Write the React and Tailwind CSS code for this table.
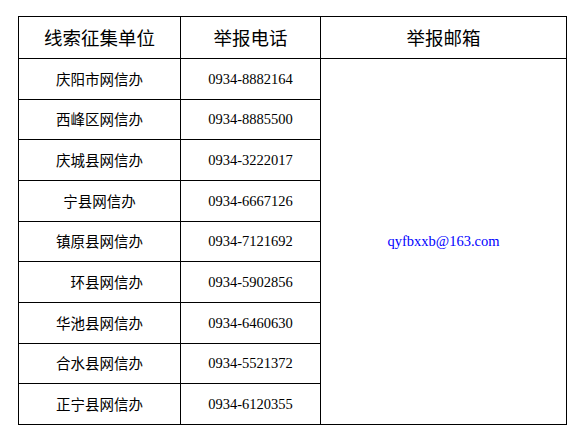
const rows = [
  ["庆阳市网信办", "0934-8882164"],
  ["西峰区网信办", "0934-8885500"],
  ["庆城县网信办", "0934-3222017"],
  ["宁县网信办", "0934-6667126"],
  ["镇原县网信办", "0934-7121692"],
  ["\u3000环县网信办", "0934-5902856"],
  ["华池县网信办", "0934-6460630"],
  ["合水县网信办", "0934-5521372"],
  ["正宁县网信办", "0934-6120355"],
];

const cjk = "font-['Noto_Sans_CJK_SC','Noto_Sans',sans-serif]";
const serif = "font-['Liberation_Serif','Times_New_Roman',serif]";

export default function App() {
  return (
    <div className="w-[576px] h-[435px] bg-white pl-[18px] pt-[16px]">
      <table className="border-collapse table-fixed w-[548px] text-black">
        <colgroup>
          <col className="w-[162px]" />
          <col className="w-[140px]" />
          <col className="w-[246px]" />
        </colgroup>
        <thead>
          <tr className="h-[42px]">
            {["线索征集单位", "举报电话", "举报邮箱"].map((h) => (
              <th
                key={h}
                className={`border border-black p-0 text-center font-normal text-[18.5px] leading-none ${cjk}`}
              >
                {h}
              </th>
            ))}
          </tr>
        </thead>
        <tbody>
          {rows.map(([unit, phone], i) => (
            <tr key={unit} className="h-[40.67px]">
              <td className={`border border-black p-0 text-center text-[14.5px] leading-none whitespace-pre ${cjk}`}>
                {unit}
              </td>
              <td className={`border border-black p-0 text-center text-[14.5px] leading-none ${serif}`}>
                {phone}
              </td>
              {i === 0 && (
                <td
                  rowSpan={rows.length}
                  className={`border border-black p-0 text-center align-middle text-[14.5px] text-[#0000ff] ${serif}`}
                >
                  qyfbxxb@163.com
                </td>
              )}
            </tr>
          ))}
        </tbody>
      </table>
    </div>
  );
}
